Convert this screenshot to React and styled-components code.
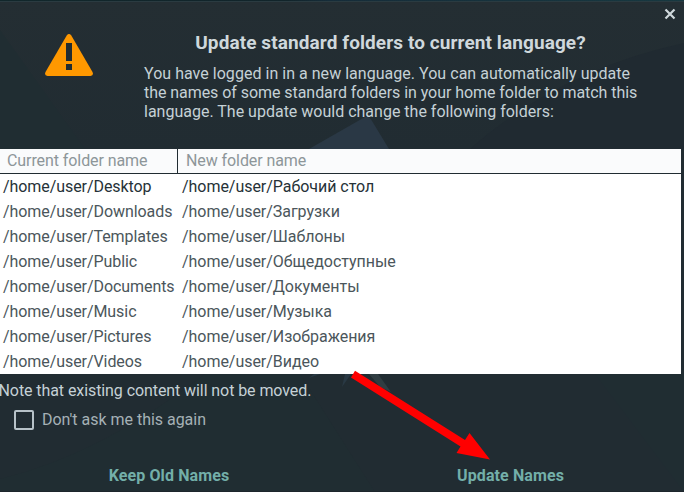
import React, { useState } from "react";
import styled, { createGlobalStyle } from "styled-components";

const GlobalStyle = createGlobalStyle`
  * { box-sizing: border-box; }
  body { margin: 0; overflow: hidden; background: #212c32; }
`;

const Dialog = styled.main`
  position: relative;
  isolation: isolate;
  display: flex;
  flex-direction: column;
  width: 684px;
  height: 492px;
  overflow: hidden;
  background: #212c32;
  color: #c5d1d6;
  font: 16px/19px Roboto, sans-serif;
`;

const Backdrop = styled.svg`
  position: absolute;
  inset: 0;
  z-index: -1;
`;

const Header = styled.header`
  display: flex;
  align-items: flex-start;
  height: 149px;
  padding: 34px 0 0 45px;
`;

const WarningIcon = styled.svg`
  flex: none;
  width: 48px;
  height: 42px;
`;

const Message = styled.div`
  width: 494px;
  margin-left: 51px;
`;

const Title = styled.h1`
  margin: -3px 0 0 -1px;
  font-size: 19px;
  line-height: 24px;
  font-weight: 700;
  letter-spacing: 0.09px;
  text-align: center;
  white-space: nowrap;
  color: #cfd8dc;
`;

const Description = styled.p`
  margin: 9px 0 0;
`;

const Line = styled.span`
  display: block;
  white-space: nowrap;
  letter-spacing: ${(p) => p.$tracking}px;
`;

const CloseButton = styled.button`
  position: absolute;
  top: 8px;
  right: 8px;
  display: flex;
  width: 12px;
  height: 12px;
  padding: 0;
  border: 0;
  background: none;
  color: #cfd8dc;
`;

const Table = styled.table`
  width: 681px;
  height: 225px;
  border-collapse: separate;
  border-spacing: 0;
  table-layout: fixed;
  background: #fff;
`;

const HeadCell = styled.th`
  width: ${(p) => (p.$first ? "178px" : "auto")};
  height: 25px;
  padding: 0 0 1px ${(p) => (p.$first ? "7px" : "8px")};
  border-bottom: 1px solid #212c32;
  border-right: ${(p) => (p.$first ? "1px solid #212c32" : "0")};
  background: #fafbfc;
  color: #8d9699;
  font-weight: 400;
  letter-spacing: -0.08px;
  text-align: left;
`;

const Cell = styled.td`
  height: 25px;
  padding: 0 0 0 ${(p) => (p.$first ? "3px" : "4px")};
  color: ${(p) => (p.$active ? "#263238" : "#4b565b")};
  letter-spacing: ${(p) => (p.$first ? -0.07 : -0.04)}px;
  white-space: nowrap;
`;

const Note = styled.p`
  margin: 7px 0 0 -1.5px;
  letter-spacing: -0.08px;
`;

const CheckRow = styled.label`
  display: flex;
  align-items: center;
  gap: 8px;
  height: 20px;
  margin: 10px 0 0 14px;
  color: #a5b1b6;
  letter-spacing: -0.02px;
`;

const CheckText = styled.span`
  padding-bottom: 2px;
`;

const Checkbox = styled.input`
  appearance: none;
  width: 20px;
  height: 20px;
  margin: 0;
  border: 2px solid #b7c2c8;
  border-radius: 2px;
  &:checked { background: #73afa9; }
`;

const Actions = styled.footer`
  display: flex;
  margin-top: 36px;
`;

const ActionButton = styled.button`
  width: ${(p) => p.$width}px;
  height: 20px;
  padding: 0;
  border: 0;
  background: none;
  color: #73afa9;
  font: 700 16px/20px Roboto, sans-serif;
  letter-spacing: 0.1px;
`;

const Arrow = styled.svg`
  position: absolute;
  top: 365px;
  left: 345px;
  pointer-events: none;
`;

const description = [
  { text: "You have logged in in a new language. You can automatically update", tracking: 0.03 },
  { text: "the names of some standard folders in your home folder to match this", tracking: -0.055 },
  { text: "language. The update would change the following folders:", tracking: 0 },
];

const folders = [
  ["Desktop", "Рабочий стол"],
  ["Downloads", "Загрузки"],
  ["Templates", "Шаблоны"],
  ["Public", "Общедоступные"],
  ["Documents", "Документы"],
  ["Music", "Музыка"],
  ["Pictures", "Изображения"],
  ["Videos", "Видео"],
];

export default function App() {
  const [skip, setSkip] = useState(false);
  return (
    <>
      <GlobalStyle />
      <Dialog>
        <Backdrop width="684" height="492" aria-hidden="true">
          <defs>
            <linearGradient id="edge">
              <stop offset="0" stopColor="#11272b" />
              <stop offset="0.42" stopColor="#11242a" />
              <stop offset="0.48" stopColor="#152c39" />
              <stop offset="1" stopColor="#173840" />
            </linearGradient>
            <linearGradient id="shine" x2="0" y2="1">
              <stop offset="0" stopColor="#242e33" />
              <stop offset="1" stopColor="#212c32" />
            </linearGradient>
          </defs>
          <path d="M0 0H684V149H0Z" fill="url(#shine)" />
          <path d="M0 30L85 149H0Z" fill="#202d32" />
          <path d="M684 43Q560 70 470 149H684Z" fill="#202a31" />
          <path d="M309 149L365 117Q369 116 372 121L389 149Z" fill="#2a3845" />
          <path d="M0 479Q100 455 205 374H300L375 492H0Z" fill="#202d32" />
          <path d="M595 374H684V492Z" fill="#202d32" />
          <path d="M309 378L320 374H314ZM342 387L345 374H351Z" fill="#293944" />
          <path d="M369 374H378L391 392L380 387Z" fill="#303d42" />
          <path d="M0 0H684V1.3H0Z" fill="url(#edge)" />
          <path d="M0 1.5H684" stroke="#2a3b41" />
          <path d="M0 491.5H684" stroke="#1d262c" />
        </Backdrop>
        <Header>
          <WarningIcon viewBox="0 0 48 42" aria-label="Warning">
            <path d="M21.7 1.4Q24-1.4 26.3 1.4L47.5 38Q49 41.5 45.5 42H2.5Q-1 41.5.5 38Z" fill="#ff9800" />
            <path d="M21 9H27V27H21ZM21 30H27V36H21Z" fill="#212c32" />
          </WarningIcon>
          <Message>
            <Title>Update standard folders to current language?</Title>
            <Description>
              {description.map((line) => (
                <Line key={line.text} $tracking={line.tracking}>{line.text}</Line>
              ))}
            </Description>
          </Message>
        </Header>
        <CloseButton aria-label="Close">
          <svg width="12" height="12" viewBox="0 0 12 12">
            <path d="M1.5 1.5L10.5 10.5M10.5 1.5L1.5 10.5" stroke="currentColor" strokeWidth="2.2" />
          </svg>
        </CloseButton>
        <Table>
          <thead>
            <tr>
              <HeadCell $first>Current folder name</HeadCell>
              <HeadCell>New folder name</HeadCell>
            </tr>
          </thead>
          <tbody>
            {folders.map(([current, next], index) => (
              <tr key={current}>
                <Cell $first $active={index === 0}>{`/home/user/${current}`}</Cell>
                <Cell $active={index === 0}>{`/home/user/${next}`}</Cell>
              </tr>
            ))}
          </tbody>
        </Table>
        <Note>Note that existing content will not be moved.</Note>
        <CheckRow>
          <Checkbox type="checkbox" checked={skip} onChange={(e) => setSkip(e.target.checked)} />
          <CheckText>Don't ask me this again</CheckText>
        </CheckRow>
        <Actions>
          <ActionButton $width={338}>Keep Old Names</ActionButton>
          <ActionButton $width={345}>Update Names</ActionButton>
        </Actions>
        <Arrow width="150" height="100" aria-hidden="true">
          <path d="M10 5.8L120 75L124.5 68L145 94.5L111.5 88L115.5 81.5L6 12.5Z" fill="#f00" />
        </Arrow>
      </Dialog>
    </>
  );
}
